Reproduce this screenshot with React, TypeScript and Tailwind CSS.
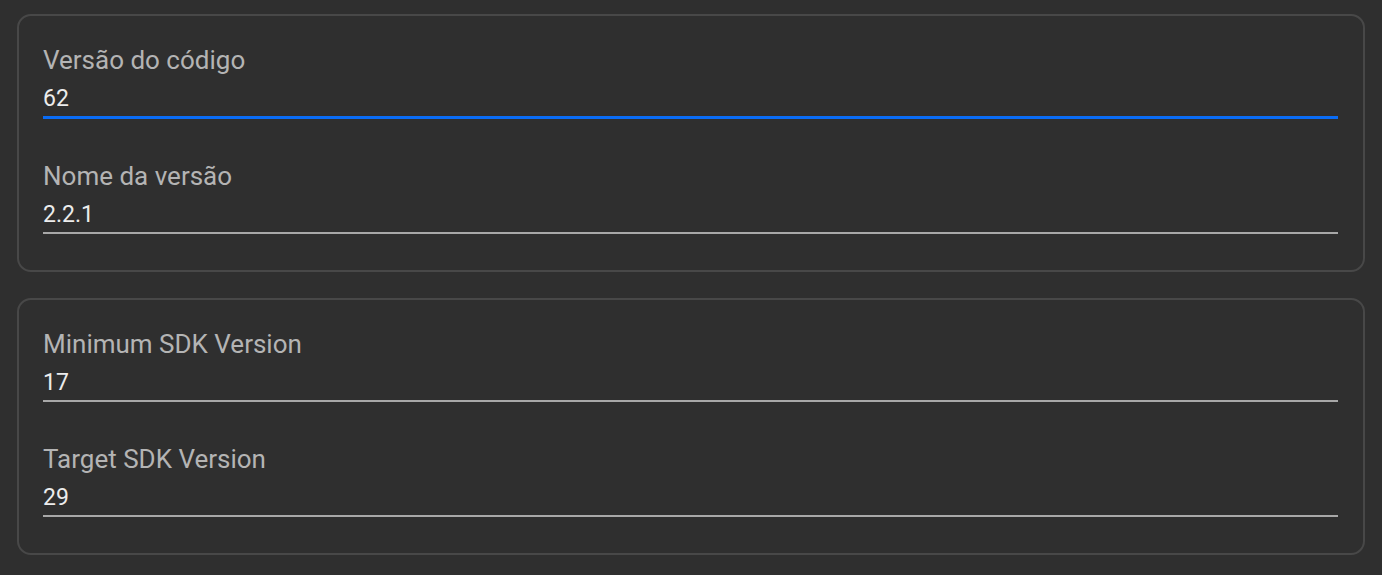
import React from 'react';

type Field = { label: string; value: string; focused?: boolean };

const groups: Field[][] = [
  [
    { label: 'Versão do código', value: '62', focused: true },
    { label: 'Nome da versão', value: '2.2.1' },
  ],
  [
    { label: 'Minimum SDK Version', value: '17' },
    { label: 'Target SDK Version', value: '29' },
  ],
];

function TextField({ label, value, focused }: Field) {
  return (
    <div className="flex flex-col">
      <span className="text-[26px] leading-[30px] text-[#b4b4b4]">{label}</span>
      <div
        className={`mt-[10px] pb-[4px] ${
          focused ? 'border-b-[3px] border-[#0a6cf5]' : 'border-b-2 border-[#a8a8a8]'
        }`}
      >
        <span className="block text-[23px] leading-[27px] text-[#ececec]">{value}</span>
      </div>
    </div>
  );
}

export default function App() {
  return (
    <div
      className="w-[1382px] h-[575px] bg-[#2f2f2f] px-[17px] pt-[14px] flex flex-col gap-[26px]"
      style={{ fontFamily: 'Roboto, "Noto Sans", sans-serif' }}
    >
      {groups.map((fields, i) => (
        <div
          key={i}
          className="border-2 border-[#484848] rounded-[14px] pl-[24px] pr-[25px] pt-[29px] pb-[36px] flex flex-col gap-[42px]"
        >
          {fields.map((f) => (
            <TextField key={f.label} {...f} />
          ))}
        </div>
      ))}
    </div>
  );
}
